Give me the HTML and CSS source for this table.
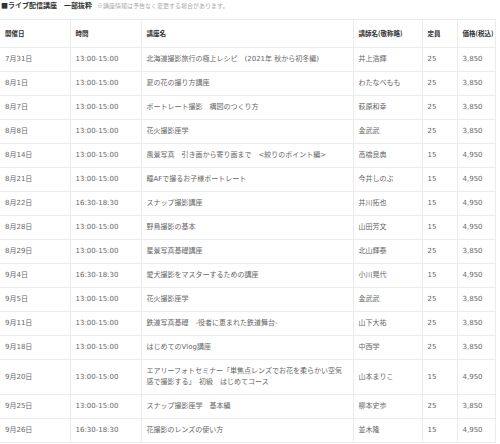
FILE: index.html
```html
<!DOCTYPE html>
<html lang="ja">
<head>
<meta charset="utf-8">
<link rel="stylesheet" href="styles.css">
</head>
<body>
<div class="page">
  <p class="title"><span class="ttl">■ライブ配信講座　一部抜粋</span><span class="note">※講座情報は予告なく変更する場合があります。</span></p>
  <table class="sched">
    <colgroup>
      <col class="c-date"><col class="c-time"><col class="c-name"><col class="c-teacher"><col class="c-cap"><col class="c-price">
    </colgroup>
    <thead>
      <tr><th>開催日</th><th>時間</th><th>講座名</th><th>講師名(敬称略)</th><th>定員</th><th>価格(税込)</th></tr>
    </thead>
    <tbody>
      <tr><td>7月31日</td><td>13:00-15:00</td><td>北海道撮影旅行の極上レシピ　(2021年 秋から初冬編)</td><td>井上浩輝</td><td>25</td><td>3,850</td></tr>
      <tr><td>8月1日</td><td>13:00-15:00</td><td>夏の花の撮り方講座</td><td>わたなべもも</td><td>25</td><td>3,850</td></tr>
      <tr><td>8月7日</td><td>13:00-15:00</td><td>ポートレート撮影　構図のつくり方</td><td>萩原和幸</td><td>25</td><td>3,850</td></tr>
      <tr><td>8月8日</td><td>13:00-15:00</td><td>花火撮影座学</td><td>金武武</td><td>25</td><td>3,850</td></tr>
      <tr><td>8月14日</td><td>13:00-15:00</td><td>風景写真　引き画から寄り画まで　&lt;絞りのポイント編&gt;</td><td>高橋良典</td><td>15</td><td>4,950</td></tr>
      <tr><td>8月21日</td><td>13:00-15:00</td><td>瞳AFで撮るお子様ポートレート</td><td>今井しのぶ</td><td>15</td><td>4,950</td></tr>
      <tr><td>8月22日</td><td>16:30-18:30</td><td>スナップ撮影講座</td><td>井川拓也</td><td>15</td><td>4,950</td></tr>
      <tr><td>8月28日</td><td>13:00-15:00</td><td>野鳥撮影の基本</td><td>山田芳文</td><td>15</td><td>4,950</td></tr>
      <tr><td>8月29日</td><td>13:00-15:00</td><td>星景写真基礎講座</td><td>北山輝泰</td><td>25</td><td>3,850</td></tr>
      <tr><td>9月4日</td><td>16:30-18:30</td><td>愛犬撮影をマスターするための講座</td><td>小川晃代</td><td>15</td><td>4,950</td></tr>
      <tr><td>9月5日</td><td>13:00-15:00</td><td>花火撮影座学</td><td>金武武</td><td>25</td><td>3,850</td></tr>
      <tr><td>9月11日</td><td>13:00-15:00</td><td>鉄道写真基礎　-役者に恵まれた鉄道舞台-</td><td>山下大祐</td><td>25</td><td>3,850</td></tr>
      <tr><td>9月18日</td><td>13:00-15:00</td><td>はじめてのVlog講座</td><td>中西学</td><td>25</td><td>3,850</td></tr>
      <tr><td>9月20日</td><td>13:00-15:00</td><td>エアリーフォトセミナー「単焦点レンズでお花を柔らかい空気<br>感で撮影する」　初級　はじめてコース</td><td>山本まりこ</td><td>15</td><td>4,950</td></tr>
      <tr><td>9月25日</td><td>13:00-15:00</td><td>スナップ撮影座学　基本編</td><td>柳本史歩</td><td>25</td><td>3,850</td></tr>
      <tr><td>9月26日</td><td>16:30-18:30</td><td>花撮影のレンズの使い方</td><td>並木隆</td><td>15</td><td>4,950</td></tr>
    </tbody>
  </table>
</div>
</body>
</html>
```
FILE: styles.css
```css
html, body {
  margin: 0;
  padding: 0;
  background: #ffffff;
}
body {
  font-family: "DejaVu Sans", "Noto Sans CJK JP", sans-serif;
  color: #666666;
}
.page {
  width: 496px;
  padding: 0 0 0 1px;
}
.title {
  margin: 0;
  height: 19px;
  line-height: 10px;
  font-size: 7px;
  white-space: nowrap;
}
.ttl {
  font-family: "Noto Sans CJK JP", sans-serif;
  font-weight: bold;
  color: #333333;
  margin-right: 5px;
}
.note {
  font-family: "Noto Sans CJK JP", sans-serif;
  font-size: 6px;
  color: #aaaaaa;
}
.sched {
  border-collapse: collapse;
  table-layout: fixed;
  width: 495px;
  margin-left: -1px;
  font-size: 7px;
  line-height: 11px;
}
.c-date { width: 70px; }
.c-time { width: 71px; }
.c-name { width: 212px; }
.c-teacher { width: 69px; }
.c-cap { width: 35px; }
.c-price { width: 38px; }
.sched th, .sched td {
  border: 1px solid #ececec;
  text-align: left;
  vertical-align: middle;
  padding: 6px 0 6px 5px;
  white-space: nowrap;
}
.sched th {
  font-family: "Noto Sans CJK JP", sans-serif;
  font-size: 6.5px;
  font-weight: bold;
  color: #333333;
  padding-top: 8px;
  padding-bottom: 8px;
}
.sched tr > :first-child {
  border-left: none;
}
```
